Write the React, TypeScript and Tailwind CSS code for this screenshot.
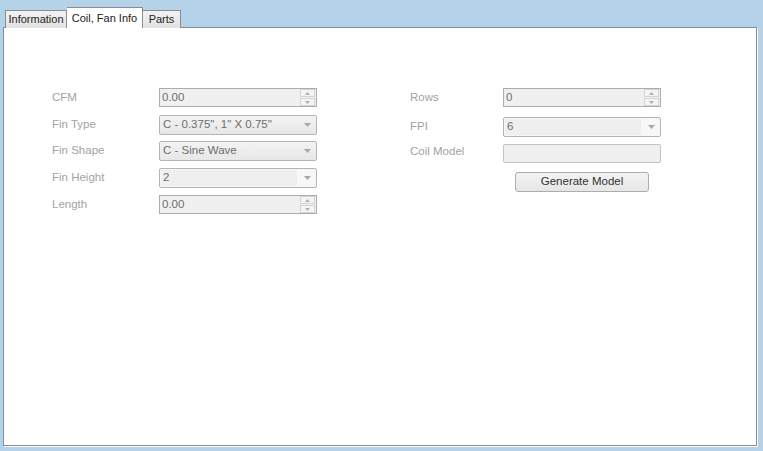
import React from 'react';

const font = { fontFamily: '"Liberation Sans", Arial, sans-serif' };

const Spinner = ({ value }: { value: string }) => (
  <div className="flex h-[19px] w-[158px] items-center border border-[#acacac] bg-[#f0f0f0]">
    <span className="flex-1 pl-[2px] text-[11.5px] leading-none text-[#6d6d6d]">{value}</span>
    <div className="mr-px flex h-[17px] w-[15px] flex-col gap-px">
      <div className="flex flex-1 items-center justify-center border border-[#d4d4d4] bg-[#f4f4f4]">
        <svg width="5" height="3" viewBox="0 0 5 3"><path d="M2.5 0L5 3H0z" fill="#b0b0b0" /></svg>
      </div>
      <div className="flex flex-1 items-center justify-center border border-[#d4d4d4] bg-[#f4f4f4]">
        <svg width="5" height="3" viewBox="0 0 5 3"><path d="M0 0h5L2.5 3z" fill="#b0b0b0" /></svg>
      </div>
    </div>
  </div>
);

const Arrow = () => (
  <svg width="7" height="4" viewBox="0 0 7 4" className="mr-[5px]">
    <path d="M0 0h7L3.5 4z" fill="#a8a8a8" />
  </svg>
);

const Combo = ({ value }: { value: string }) => (
  <div className="flex h-[20px] w-[158px] items-center rounded-[2px] border border-[#b4b4b4] bg-gradient-to-b from-[#f3f3f3] to-[#e7e7e7]">
    <span className="flex-1 pl-[3px] text-[11.5px] leading-none text-[#6d6d6d]">{value}</span>
    <Arrow />
  </div>
);

const EditCombo = ({ value }: { value: string }) => (
  <div className="flex h-[20px] w-[158px] items-center rounded-[2px] border border-[#b4b4b4] bg-[#f7f7f7]">
    <span className="ml-px flex h-[16px] w-[136px] items-center bg-[#efefef] pl-[2px] text-[11.5px] leading-none text-[#6d6d6d]">{value}</span>
    <span className="flex-1" />
    <Arrow />
  </div>
);

const Row = ({ label, h, labelW, children }: { label: string; h: string; labelW: string; children: React.ReactNode }) => (
  <div className={`flex ${h}`}>
    <div className={`${labelW} pt-[2px] text-[11.5px] leading-[14px] text-[#a3a3a3]`}>{label}</div>
    {children}
  </div>
);

export default function App() {
  return (
    <div className="h-[451px] w-[763px] overflow-hidden bg-[#b4d2e8] pt-[7px]" style={font}>
      {/* tabs */}
      <div className="relative z-10 flex h-[21px] items-end pl-[5px]">
        <div className="flex h-[18px] w-[62px] items-center justify-center border border-b-0 border-[#898c95] bg-gradient-to-b from-[#f2f2f2] to-[#e2e2e2] text-[11px] text-[#222]">
          Information
        </div>
        <div className="flex h-[21px] w-[76px] items-start justify-center border border-b-0 border-l-0 border-[#898c95] bg-white pt-[2px] text-[11px] text-[#222]">
          Coil, Fan Info
        </div>
        <div className="flex h-[18px] w-[38px] items-center justify-center border border-b-0 border-l-0 border-[#898c95] bg-gradient-to-b from-[#f2f2f2] to-[#e2e2e2] text-[11px] text-[#222]">
          Parts
        </div>
      </div>
      {/* panel */}
      <div className="-mt-px ml-[3px] h-[419px] w-[754px] border border-[#898c95] bg-white shadow-[1px_1px_0_#ffffff] pl-[48px] pt-[60px]">
        <div className="flex">
          <div className="flex w-[358px] flex-col">
            <Row label="CFM" h="h-[27px]" labelW="w-[107px]"><Spinner value="0.00" /></Row>
            <Row label="Fin Type" h="h-[26px]" labelW="w-[107px]"><Combo value={'C - 0.375", 1" X 0.75"'} /></Row>
            <Row label="Fin Shape" h="h-[27px]" labelW="w-[107px]"><Combo value="C - Sine Wave" /></Row>
            <Row label="Fin Height" h="h-[27px]" labelW="w-[107px]"><EditCombo value="2" /></Row>
            <Row label="Length" h="h-[27px]" labelW="w-[107px]"><Spinner value="0.00" /></Row>
          </div>
          <div className="flex flex-col">
            <Row label="Rows" h="h-[29px]" labelW="w-[93px]"><Spinner value="0" /></Row>
            <Row label="FPI" h="h-[27px]" labelW="w-[93px]"><EditCombo value="6" /></Row>
            <div className="flex h-[28px]">
              <div className="w-[93px] text-[11.5px] leading-[14px] text-[#a3a3a3]">Coil Model</div>
              <div className="h-[19px] w-[158px] rounded-[2px] border border-[#c4c4c4] bg-[#f0f0f0]" />
            </div>
            <div className="flex pl-[105px]">
              <button className="h-[20px] w-[134px] rounded-[3px] border border-[#adadad] bg-gradient-to-b from-[#f3f3f3] to-[#e6e6e6] text-[11.5px] leading-none text-[#333]">
                Generate Model
              </button>
            </div>
          </div>
        </div>
      </div>
    </div>
  );
}
